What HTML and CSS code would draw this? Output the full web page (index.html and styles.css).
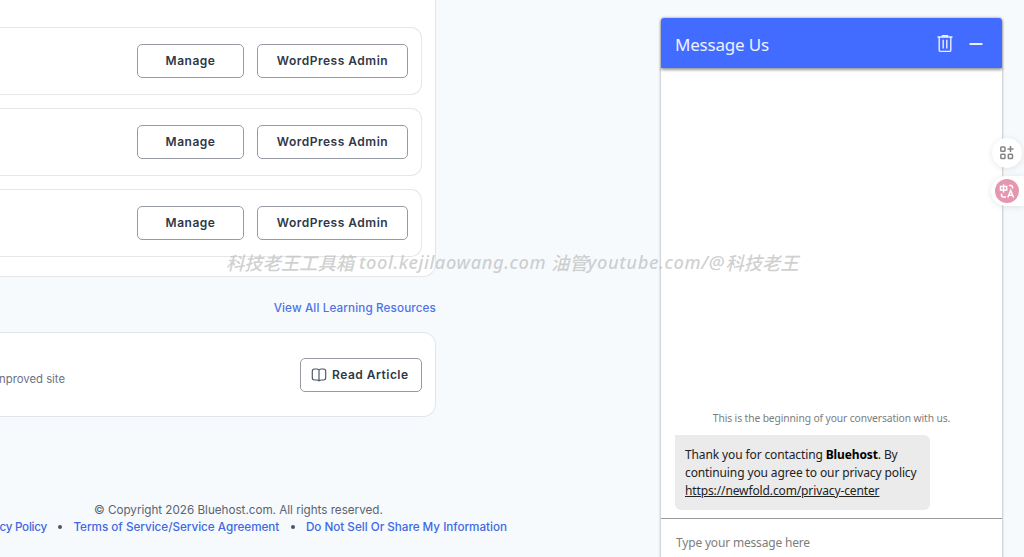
FILE: index.html
```html
<!DOCTYPE html>
<html lang="en">
<head>
<meta charset="utf-8">
<title>Bluehost</title>
<link rel="stylesheet" href="styles.css">
</head>
<body>
<main class="page">
  <section class="sites">
    <div class="site"><button class="btn manage">Manage</button><button class="btn admin">WordPress Admin</button></div>
    <div class="site"><button class="btn manage">Manage</button><button class="btn admin">WordPress Admin</button></div>
    <div class="site"><button class="btn manage">Manage</button><button class="btn admin">WordPress Admin</button></div>
  </section>
  <a class="view-all"><span>View All Learning Resources</span></a>
  <section class="article">
    <p class="summary"><span>nproved site</span></p>
    <button class="btn read">
      <svg width="16" height="16" viewBox="0 0 16 16" fill="none" stroke="#4b5563" stroke-width="1.15" stroke-linejoin="round"><path d="M8 3C7.400 2.300 6.600 2 5.600 2H3.500C2.100 2 1.300 2.800 1.300 4.200v6.600c0 1.400.8 2.200 2.200 2.200h2.100c1 0 1.800.2 2.400.9.600-.7 1.400-.9 2.400-.9h2.100c1.400 0 2.200-.8 2.200-2.200V4.200C14.700 2.800 13.900 2 12.500 2h-2.100C9.400 2 8.600 2.300 8 3zM8 3v10.900"/></svg>
      <span class="label">Read Article</span>
    </button>
  </section>
  <footer class="footer">
    <p class="copyright"><span>© Copyright 2026 Bluehost.com. All rights reserved.</span></p>
    <nav class="links"><a class="privacy">cy Policy</a><i class="dot"></i><a class="terms">Terms of Service/Service Agreement</a><i class="dot"></i><a>Do Not Sell Or Share My Information</a></nav>
  </footer>
</main>

<aside class="chat">
  <header class="chat-head">
    <h2>Message Us</h2>
    <svg class="trash" width="16" height="18" viewBox="0 0 16 18" fill="none" stroke="#e9edff" stroke-width="1.4"><path d="M.5 2h15M5.500 1.700V.8h5v.9M2.200 2v13.200c0 .8.400 1.200 1.200 1.200h9.200c.8 0 1.200-.4 1.200-1.200V2M6.200 4.800v8.800M9.800 4.800v8.800"/></svg>
    <svg class="minimize" width="14" height="18" viewBox="0 0 14 18" stroke="#fff" stroke-width="1.800"><path d="M.5 9h13"/></svg>
  </header>
  <div class="messages">
    <p class="intro"><span>This is the beginning of your conversation with us.</span></p>
    <div class="bubble"><p class="l1">Thank you for contacting <b>Bluehost</b>. By</p><p class="l2">continuing you agree to our privacy policy</p><p class="l3"><a>https://newfold.com/privacy-center</a></p></div>
  </div>
  <div class="composer">Type your message here</div>
</aside>

<div class="tools">
  <div class="tool-circle">
    <svg width="16" height="16" viewBox="0 0 16 16" fill="none" stroke="#858585" stroke-width="1.500"><rect x="1.800" y="2" width="4.200" height="4.200" rx=".8"/><rect x="1.800" y="9.300" width="4.200" height="4.200" rx=".8"/><rect x="9.300" y="9.300" width="4.200" height="4.200" rx=".8"/><path d="M11.500 1v6M8.500 4h6"/></svg>
  </div>
  <div class="tool-tab">
    <svg width="24" height="24" viewBox="0 0 24 24" fill="none" stroke="#fff" stroke-width="1.500"><circle cx="12" cy="12" r="12" fill="#e497ae" stroke="none"/><path d="M5.500 7.500h6.200v3.500H5.500zM8.600 5.500v8M14 6.500h2q1.500 0 1.500 2v1M6.500 14.500v1.500q0 2 2 2H11M12.800 18.500l2.900-7 2.900 7M13.800 16.300h3.800"/></svg>
  </div>
</div>

<div class="watermark"><span>科技老王工具箱</span> <span class="domain">tool.kejilaowang.com</span> <span>油管</span><span class="channel">youtube.com/@</span><span>科技老王</span></div>
</body>
</html>
```
FILE: styles.css
```css
* { box-sizing: border-box; }
body { margin: 0; width: 1024px; height: 557px; overflow: hidden; background: #f6fafd; font-family: Inter, sans-serif; color: #303848; position: relative; }
p, h2 { margin: 0; }
.page { width: 520px; height: 557px; overflow: hidden; display: flex; flex-direction: column; }
.sites { width: 436px; height: 277px; padding: 27px 13px 0 0; background: #fff; border: 1px solid #e3e6ea; border-width: 0 1px 1px 0; border-radius: 0 0 13px 0; display: flex; flex-direction: column; gap: 13px; }
.site { height: 68px; flex: none; padding-right: 13px; border: 1px solid #e6e7e9; border-left: 0; border-radius: 0 11px 11px 0; display: flex; align-items: center; justify-content: flex-end; gap: 13px; }
.btn { height: 34px; padding: 0; border: 1px solid #969ba6; border-radius: 5px; background: #fff; color: #303848; font: 600 12px/16px Inter, sans-serif; letter-spacing: .5px; white-space: nowrap; }
.manage { width: 107px; }
.admin { width: 151px; }
.view-all { width: 436px; height: 55px; padding-top: 23px; text-align: right; color: #4f72e5; font-size: 11.700px; line-height: 16px; font-weight: 500; letter-spacing: .12px; }
.article { width: 436px; height: 85px; background: #fff; border: 1px solid #e1e6ec; border-left: 0; border-radius: 0 13px 13px 0; padding-right: 13px; display: flex; align-items: center; justify-content: space-between; }
.summary { width: 65px; padding-top: 8px; display: flex; justify-content: flex-end; color: #6b7280; font-size: 11.300px; line-height: 16px; white-space: nowrap; }
.read { width: 122px; display: flex; align-items: center; padding-left: 10px; gap: 5px; }
.footer { padding-top: 85px; font-size: 11.700px; line-height: 16.500px; white-space: nowrap; color: #5b6470; }
.copyright { padding-left: 94px; letter-spacing: -.02px; }
.links { width: 507px; display: flex; align-items: center; justify-content: flex-end; gap: 11.300px; color: #4169e1; font-weight: 500; letter-spacing: -.02px; }
.privacy { letter-spacing: -.3px; }
.dot { width: 4px; height: 4px; flex: none; border-radius: 50%; background: #4b5563; }

.chat { position: absolute; left: 661px; top: 18px; width: 341px; height: 550px; background: #fff; border-radius: 3px; box-shadow: 0 0 3px rgba(0,0,0,.4); font-family: "Noto Sans", "Open Sans", sans-serif; display: flex; flex-direction: column; }
.chat-head { height: 50px; flex: none; background: #426cff; color: #eef1ff; border-radius: 3px 3px 0 0; padding: 2px 19px 0 14px; display: flex; align-items: center; box-shadow: 0 2px 3px rgba(0,0,0,.4); }
.chat-head h2 { flex: 1; padding-top: 2px; font-size: 17px; line-height: 24px; font-weight: 400; letter-spacing: -.2px; }
.trash { margin-right: 16px; }
.messages { flex: 1; display: flex; flex-direction: column; justify-content: flex-end; padding: 0 14px 8px; }
.intro { text-align: center; color: #7d7d7d; font-size: 10.300px; letter-spacing: -.11px; line-height: 16px; margin-bottom: 9px; white-space: nowrap; }
.bubble { width: 255px; height: 75px; background: #ebebeb; border-radius: 0 6px 6px 6px; padding: 11px 10px; font-size: 12px; letter-spacing: -.12px; line-height: 18px; color: #222; white-space: nowrap; }
.bubble b { color: #000; }
.bubble a { text-decoration: underline; }
.composer { height: 50px; border-top: 1px solid #999; padding: 15px 15px 0; font-size: 12px; letter-spacing: -.18px; line-height: 18px; color: #7d7d7d; }

.tools { position: absolute; right: 0; top: 138px; width: 33px; display: flex; flex-direction: column; gap: 8px; }
.tool-circle { width: 30px; height: 30px; margin-left: 1px; border-radius: 50%; background: #fff; box-shadow: 0 1px 6px rgba(0,0,0,.1); display: flex; align-items: center; justify-content: center; }
.tool-tab { height: 30px; margin-left: 0; padding-left: 4px; border-radius: 15px 0 0 15px; background: #fff; box-shadow: 0 1px 6px rgba(0,0,0,.1); display: flex; align-items: center; }
.watermark { position: absolute; left: 226px; top: 248px; display: flex; height: 28px; line-height: 28px; white-space: nowrap; font-family: "Noto Sans CJK SC", sans-serif; font-size: 18.300px; font-weight: 500; font-style: italic; color: rgba(190,190,190,.72); }
.domain { width: 197px; padding-left: 5px; letter-spacing: .55px; font-family: "Noto Sans", "Noto Sans CJK SC", sans-serif; }
.channel { width: 138px; letter-spacing: .6px; font-family: "Noto Sans", "Noto Sans CJK SC", sans-serif; }
```
